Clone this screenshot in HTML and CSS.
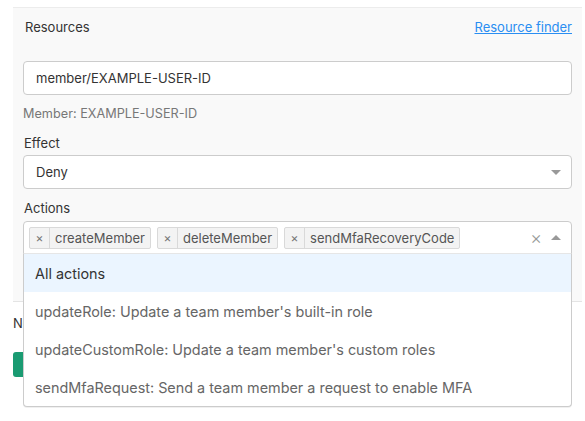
FILE: index.html
```html
<!DOCTYPE html>
<html>
<head>
<meta charset="utf-8">
<link rel="stylesheet" href="styles.css">
</head>
<body>
<div class="page">
  <section class="panel">
    <div class="field-head">
      <span class="label">Resources</span>
      <a class="link" href="#">Resource finder</a>
    </div>
    <div class="control input">member/EXAMPLE-USER-ID</div>
    <div class="help">Member: EXAMPLE-USER-ID</div>
    <div class="label effect-label">Effect</div>
    <div class="control select">
      <span>Deny</span>
      <span class="arrow down"></span>
    </div>
    <div class="label actions-label">Actions</div>
    <div class="multi-wrap">
      <div class="multi">
        <div class="tags">
          <span class="tag"><span class="tag-x">×</span><span class="tag-text">createMember</span></span>
          <span class="tag"><span class="tag-x">×</span><span class="tag-text">deleteMember</span></span>
          <span class="tag"><span class="tag-x">×</span><span class="tag-text">sendMfaRecoveryCode</span></span>
        </div>
        <span class="clear">×</span>
        <span class="arrow up"></span>
      </div>
      <div class="menu">
        <div class="option focused">All actions</div>
        <div class="option">updateRole: Update a team member's built-in role</div>
        <div class="option">updateCustomRole: Update a team member's custom roles</div>
        <div class="option">sendMfaRequest: Send a team member a request to enable MFA</div>
      </div>
    </div>
  </section>
  <div class="below">
    <p class="note">Note</p>
    <button class="save">Save</button>
  </div>
</div>
</body>
</html>
```

FILE: styles.css
```css
html, body {
  margin: 0;
  padding: 0;
  background: #fff;
}
body {
  font-family: "Inter", "Liberation Sans", Arial, sans-serif;
  color: #333;
  font-size: 13px;
  min-height: 421px;
}
.page {
  padding: 7px 3px 0 13px;
}
.panel {
  background: #f9f9f9;
  border-top: 1px solid #ececec;
  border-bottom: 1px solid #e4e4e4;
  padding: 11px 10px 47px 10px;
}
.field-head {
  display: flex;
  justify-content: space-between;
  align-items: center;
  height: 16px;
  padding: 0 0 0 1px;
}
.label {
  font-size: 13px;
  line-height: 16px;
  color: #333;
  padding-left: 1px;
}
.link {
  font-size: 13px;
  line-height: 16px;
  color: #2a8ef2;
  text-decoration: underline;
}
.control {
  box-sizing: border-box;
  height: 34px;
  background: #fff;
  border: 1px solid #ccc;
  border-radius: 4px;
  display: flex;
  align-items: center;
  padding: 0 12px;
  font-size: 13px;
  color: #333;
}
.input {
  margin-top: 26px;
}
.help {
  margin-top: 11px;
  font-size: 12.7px;
  line-height: 16px;
  color: #777;
}
.effect-label {
  margin-top: 13px;
}
.select {
  margin-top: 4px;
  justify-content: space-between;
  padding-right: 10px;
}
.actions-label {
  margin-top: 11px;
}
.arrow {
  width: 0;
  height: 0;
  border-left: 5px solid transparent;
  border-right: 5px solid transparent;
}
.arrow.down {
  border-top: 5px solid #999;
}
.arrow.up {
  border-bottom: 5px solid #999;
}
.multi-wrap {
  position: relative;
  margin-top: 5px;
}
.multi {
  box-sizing: border-box;
  height: 33px;
  background: #fff;
  border: 1px solid #ccc;
  border-radius: 4px 4px 0 0;
  display: flex;
  align-items: center;
  padding: 0 10px 0 5px;
}
.tags {
  flex: 1;
  display: flex;
  gap: 6px;
}
.tag {
  display: flex;
  align-items: stretch;
  height: 22px;
  box-sizing: border-box;
  background: #f3f3f3;
  border: 1px solid #d9d9d9;
  border-radius: 2px;
  font-size: 13px;
  color: #555;
}
.tag-x {
  width: 19px;
  display: flex;
  align-items: center;
  justify-content: center;
  border-right: 1px solid #d9d9d9;
  font-size: 12px;
  color: #777;
}
.tag-text {
  display: flex;
  align-items: center;
  padding: 0 5px;
}
.clear {
  font-size: 18px;
  font-weight: 300;
  color: #999;
  margin-right: 9px;
  line-height: 18px;
}
.menu {
  position: absolute;
  left: 0;
  right: 0;
  top: 32px;
  background: #fff;
  border: 1px solid #ccc;
  border-top-color: #e6e6e6;
  border-radius: 0 0 4px 4px;
  box-shadow: 0 1px 0 rgba(0,0,0,0.06);
  z-index: 2;
}
.option {
  height: 38px;
  display: flex;
  align-items: center;
  padding: 0 11px;
  font-size: 14.4px;
  color: #666;
}
.option.focused {
  background: #ebf5ff;
  color: #333;
}
.below {
  padding-top: 13px;
}
.note {
  margin: 0;
  font-size: 13px;
  line-height: 16px;
  color: #333;
}
.save {
  margin-top: 21px;
  height: 25px;
  padding: 0 10px;
  border: none;
  border-radius: 3px;
  background: #1a9b72;
  color: #fff;
  font-family: inherit;
  font-size: 13px;
}
```
